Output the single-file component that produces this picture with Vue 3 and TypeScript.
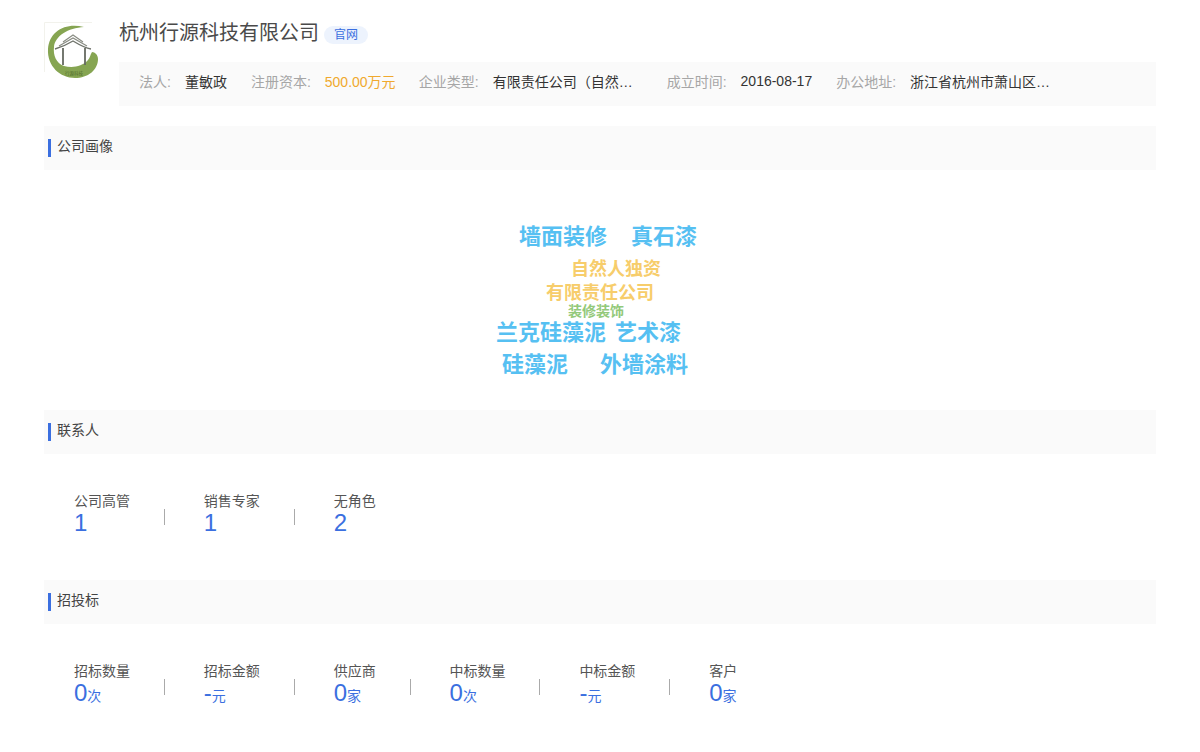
<template>
  <div class="page">
    <div class="head">
      <div class="logo">
        <svg width="56" height="58" viewBox="0 0 56 58">
          <path d="M0.500 50V0.500H48" fill="none" stroke="#f2f2ec" stroke-width="1" />
          <path d="M40 5C22 0 5 9 4 27C3 44 16 56 31 56C44 56 54 48 54 37C54 33 51 30 48 30C46 33 46 36 44 38C38 45 28 46 20 44C12 41 9 33 10 25C11 14 24 6 40 5Z" fill="#86a552" />
          <path d="M19 20L29 13L39 20M15 24L29 16L43 24" fill="none" stroke="#8a8d84" stroke-width="1.200" />
          <path d="M11 27C18 25 24 22 29 19C34 22 41 26 47 27" fill="none" stroke="#6f736b" stroke-width="1.400" />
          <path d="M19 26V43M41 26V43" fill="none" stroke="#666a62" stroke-width="1.800" />
          <text x="30" y="52.500" class="logo-text">行源科技</text>
        </svg>
      </div>
      <div class="head-main">
        <div class="title-row">
          <span class="company">杭州行源科技有限公司</span>
          <span class="site-tag">官网</span>
        </div>
        <div class="info-bar">
          <div v-for="item in infoItems" :key="item.label" class="info-item">
            <span class="info-label">{{ item.label }}:</span>
            <span class="info-value" :class="{ money: item.money, clip: item.clip }">{{ item.value }}</span>
          </div>
        </div>
      </div>
    </div>

    <div class="section-title"><span>公司画像</span></div>
    <div class="cloud">
      <span
        v-for="word in words"
        :key="word.text"
        class="word"
        :class="word.kind"
        :style="{ left: word.x + 'px', top: word.y + 'px' }"
      >{{ word.text }}</span>
    </div>

    <div class="section-title"><span>联系人</span></div>
    <div class="stats">
      <div v-for="stat in contacts" :key="stat.label" class="stat">
        <div class="stat-label">{{ stat.label }}</div>
        <div class="stat-value">{{ stat.value }}</div>
      </div>
    </div>

    <div class="section-title"><span>招投标</span></div>
    <div class="stats">
      <div v-for="stat in bids" :key="stat.label" class="stat">
        <div class="stat-label">{{ stat.label }}</div>
        <div class="stat-value">{{ stat.value }}<small>{{ stat.unit }}</small></div>
      </div>
    </div>
  </div>
</template>

<script setup lang="ts">
const infoItems = [
  { label: '法人', value: '董敏政' },
  { label: '注册资本', value: '500.00万元', money: true },
  { label: '企业类型', value: '有限责任公司（自然…', clip: true },
  { label: '成立时间', value: '2016-08-17' },
  { label: '办公地址', value: '浙江省杭州市萧山区…', clip: true },
]

const words = [
  { text: '墙面装修', x: 475, y: 54, kind: 'big' },
  { text: '真石漆', x: 587, y: 54, kind: 'big' },
  { text: '自然人独资', x: 527, y: 89, kind: 'mid' },
  { text: '有限责任公司', x: 502, y: 113, kind: 'mid' },
  { text: '装修装饰', x: 524, y: 133, kind: 'small' },
  { text: '兰克硅藻泥', x: 452, y: 150, kind: 'big' },
  { text: '艺术漆', x: 571, y: 150, kind: 'big' },
  { text: '硅藻泥', x: 458, y: 182, kind: 'big' },
  { text: '外墙涂料', x: 556, y: 182, kind: 'big' },
]

const contacts = [
  { label: '公司高管', value: '1' },
  { label: '销售专家', value: '1' },
  { label: '无角色', value: '2' },
]

const bids = [
  { label: '招标数量', value: '0', unit: '次' },
  { label: '招标金额', value: '-', unit: '元' },
  { label: '供应商', value: '0', unit: '家' },
  { label: '中标数量', value: '0', unit: '次' },
  { label: '中标金额', value: '-', unit: '元' },
  { label: '客户', value: '0', unit: '家' },
]
</script>

<style scoped>
.page {
  padding: 0 44px;
  font-family: "Liberation Sans", "Noto Sans CJK SC", sans-serif;
  font-size: 14px;
  color: #333;
}

.head {
  display: flex;
  height: 126px;
  padding-top: 22px;
  box-sizing: border-box;
}

.logo {
  width: 54px;
  height: 54px;
  margin-right: 21px;
}

.logo svg {
  display: block;
}

.logo-text {
  font-size: 4.500px;
  fill: #4f6a2a;
  text-anchor: middle;
}

.head-main {
  flex: 1;
}

.title-row {
  display: flex;
  align-items: center;
  height: 26px;
  margin-top: -4px;
}

.company {
  font-size: 20px;
  color: #4a4a4a;
}

.site-tag {
  width: 44px;
  height: 18px;
  margin: 8px 0 0 5px;
  border-radius: 9px;
  background: #edf3fd;
  color: #3b6fe0;
  font-size: 12px;
  line-height: 18px;
  text-align: center;
}

.info-bar {
  display: flex;
  align-items: center;
  gap: 24px;
  height: 44px;
  margin-top: 18px;
  padding: 0 0 6px 20px;
  box-sizing: border-box;
  background: #fafafa;
}

.info-item {
  display: flex;
  align-items: center;
}

.info-label {
  margin-right: 14px;
  color: #a6a6a6;
}

.info-value {
  color: #333;
}

.info-value.money {
  width: 70px;
  white-space: nowrap;
  color: #f0a92e;
}

.info-value.clip {
  width: 150px;
  white-space: nowrap;
}

.section-title {
  height: 44px;
  padding: 13px 0 0 4px;
  box-sizing: border-box;
  background: #fafafa;
}

.section-title span {
  display: block;
  height: 18px;
  padding-left: 6px;
  border-left: 3px solid #3b6fe0;
  line-height: 14px;
  color: #444;
}

.cloud {
  position: relative;
  height: 240px;
}

.word {
  position: absolute;
  white-space: nowrap;
  line-height: 1.2;
  font-weight: 600;
}

.word.big {
  font-size: 22px;
  color: #56c0f2;
}

.word.mid {
  font-size: 18px;
  color: #f7cd6b;
}

.word.small {
  font-size: 14px;
  color: #93c97a;
}

.stats {
  display: flex;
  height: 126px;
  padding: 39px 0 0 30px;
  box-sizing: border-box;
}

.stat {
  position: relative;
  padding-right: 33.850px;
  margin-right: 40px;
}

.stat::after {
  content: "";
  position: absolute;
  right: -1px;
  top: 16px;
  width: 1px;
  height: 16px;
  background: #aaa;
}

.stat:last-child::after {
  display: none;
}

.stat-label {
  line-height: 16px;
  color: #555;
}

.stat-value {
  line-height: 28px;
  font-size: 24px;
  color: #3b6fe0;
}

.stat-value small {
  font-size: 14px;
}
</style>
